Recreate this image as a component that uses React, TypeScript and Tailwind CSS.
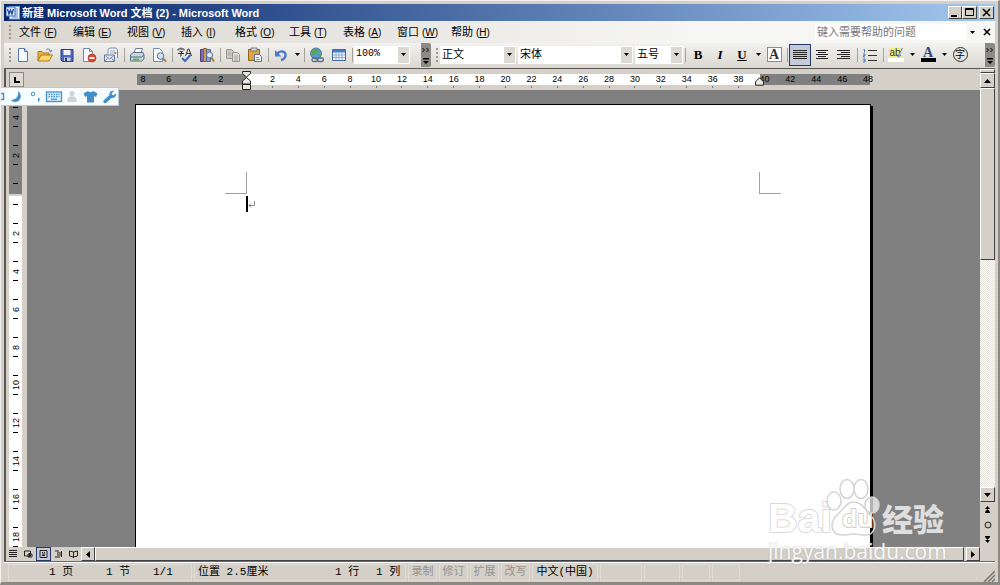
import * as React from "react";
import { clsx } from "clsx";

const menus = [
  ["文件", "F"],
  ["编辑", "E"],
  ["视图", "V"],
  ["插入", "I"],
  ["格式", "O"],
  ["工具", "T"],
  ["表格", "A"],
  ["窗口", "W"],
  ["帮助", "H"],
];

// Ruler labels in characters, two per step; 0 is where the indent marker sits
const rulerMarks = Array.from({ length: 29 }, (_, i) => i * 2 - 8);
const sideMarks = Array.from({ length: 12 }, (_, i) => i * 2 - 4);

const cjk = "font-['Liberation_Sans','Noto_Sans_CJK_SC',sans-serif]";
const mono = "font-['Liberation_Mono','Noto_Sans_CJK_SC',monospace]";
const raised = "bg-[#d4d0c8] border border-t-white border-l-white border-r-[#404040] border-b-[#404040]";

function Icon({ children, className }: { children: React.ReactNode; className?: string }) {
  return (
    <svg viewBox="0 0 16 16" className={clsx("w-4 h-4 shrink-0", className)} fill="none">
      {children}
    </svg>
  );
}

function ToolButton({ label, active, children }: { label: string; active?: boolean; children: React.ReactNode }) {
  return (
    <button
      aria-label={label}
      className={clsx(
        "w-[22px] h-[22px] shrink-0 flex items-center justify-center",
        active && "bg-[#c5cad8] border border-[#26386b]"
      )}
    >
      {children}
    </button>
  );
}

function Caret({ label }: { label: string }) {
  return (
    <button aria-label={label} className="w-[10px] h-[22px] shrink-0 flex items-center justify-center">
      <svg viewBox="0 0 5 3" className="w-[5px] h-[3px]"><path d="M0 0h5L2.5 3z" fill="#000" /></svg>
    </button>
  );
}

function Separator() {
  return <div className="w-1 h-[14px] shrink-0 flex justify-center"><div className="w-px bg-[#a5a29b]" /></div>;
}

function Grip() {
  return (
    <svg viewBox="0 0 3 14" className="w-[3px] h-[14px] shrink-0" fill="#9b988f">
      <path d="M0 0h2v2H0zM0 4h2v2H0zM0 8h2v2H0zM0 12h2v2H0z" />
    </svg>
  );
}

function Combo({ label, value, className, textClass }: { label: string; value: string; className: string; textClass: string }) {
  return (
    <div className={clsx("relative h-[18px] shrink-0 bg-white", className)}>
      <select aria-label={label} className={clsx("block appearance-none w-full h-4 pl-[2px] leading-4 outline-none", textClass)}>
        <option>{value}</option>
      </select>
      <span className="absolute right-px top-px w-[11px] h-4 bg-[#dcd9d2] flex items-center justify-center pointer-events-none">
        <svg viewBox="0 0 5 3" className="w-[5px] h-[3px]"><path d="M0 0h5L2.5 3z" fill="#000" /></svg>
      </span>
    </div>
  );
}

function Overflow() {
  return (
    <button aria-label="工具栏选项" className="w-[10px] h-[24px] shrink-0 rounded-r-xs bg-[#8c8a86] flex justify-center">
      <svg viewBox="0 0 8 24" className="w-2 h-6" fill="#000">
        <path d="M0 5h1l2 2-2 2H0l2-2zM4 5h1l2 2-2 2H4l2-2zM1 15h6v1.500H1zM1 18h6l-3 3z" />
      </svg>
    </button>
  );
}

function TitleBar() {
  return (
    <header className="h-[17px] shrink-0 flex items-center pl-[2px] pr-px bg-linear-to-r from-[#0b256b] to-[#a3c8ef]">
      <svg viewBox="0 0 14 14" className="w-[14px] h-[14px]">
        <rect x="3.500" y=".5" width="10" height="12.500" fill="#eef4fc" stroke="#7d9fd0" />
        <path d="M8 3h4M9 5h3M9 7h3M8 9h4M6 11h6" stroke="#6a90cc" />
        <rect x="0" y="1" width="9" height="9" fill="#dce9fb" stroke="#4d78bd" />
        <path d="M1.500 3l1.500 5 1.500-4L6 8l1.500-5" stroke="#1d4796" strokeWidth="1.300" fill="none" />
      </svg>
      <h1 className={clsx("ml-[2px] text-[11px] leading-4 font-bold text-white whitespace-nowrap", cjk)}>
        新建 Microsoft Word 文档 (2) - Microsoft Word
      </h1>
      <div className="ml-auto flex">
        <button aria-label="最小化" className={clsx("w-[14px] h-[13px]", raised)}>
          <svg viewBox="0 0 12 11"><path d="M2 8h6v2H2z" /></svg>
        </button>
        <button aria-label="最大化" className={clsx("w-[15px] h-[13px]", raised)}>
          <svg viewBox="0 0 13 11"><path d="M2.500 1.500h8v7h-8zM2 2.500h9" fill="none" stroke="#000" /></svg>
        </button>
        <button aria-label="关闭" className={clsx("ml-[2px] w-[15px] h-[13px]", raised)}>
          <svg viewBox="0 0 13 11"><path d="M3 2l7 7M10 2L3 9" stroke="#000" strokeWidth="1.600" /></svg>
        </button>
      </div>
    </header>
  );
}

function MenuBar() {
  return (
    <nav className={clsx("h-[22px] shrink-0 flex items-center pl-[5px] pr-[2px] bg-linear-to-r from-[#dad6ce] to-[#f6f6f5] to-70%", cjk)}>
      <Grip />
      <div className="flex ml-[7px]">
        {menus.map(([name, key]) => (
          <button key={name} className="w-[54px] shrink-0 text-left text-[11px] leading-[18px] whitespace-nowrap">
            {name}
            <span className="ml-[3px] text-[10px]">(<u>{key}</u>)</span>
          </button>
        ))}
      </div>
      <input
        aria-label="键入需要帮助的问题"
        placeholder="键入需要帮助的问题"
        className="ml-auto w-[152px] h-4 pl-[2px] bg-white text-[11px] leading-4 placeholder:text-[#77767a] outline-none"
      />
      <Caret label="帮助列表" />
      <button aria-label="关闭文档" className="ml-1 w-3 h-4 flex items-center justify-center">
        <svg viewBox="0 0 8 8" className="w-2 h-2"><path d="M1 1l6 6M7 1L1 7" stroke="#000" strokeWidth="1.600" /></svg>
      </button>
    </nav>
  );
}

function StandardToolbar() {
  return (
    <div className="flex items-center shrink-0 pl-[3px]">
      <Grip />
      <ToolButton label="新建空白文档">
        <Icon><path d="M3.500 1.500h6l3 3v10h-9z" fill="#f5f9ff" stroke="#5a78ad" /><path d="M9.500 1.500v3h3" fill="#bcd0ee" stroke="#5a78ad" /></Icon>
      </ToolButton>
      <ToolButton label="打开">
        <Icon>
          <path d="M1 14V4.500h4l1.500 1.500H12v3" fill="#e9b53c" stroke="#a87b20" />
          <path d="M1 14l3-6h11.500l-3.500 6z" fill="#fbd56d" stroke="#a87b20" />
          <path d="M9 3c2-2 4-1 4.500 1.500M12 3.500l1.600 1.500L15 3" stroke="#4f79b5" />
        </Icon>
      </ToolButton>
      <ToolButton label="保存">
        <Icon>
          <path d="M2 2.500h12v12H3.500L2 13z" fill="#4e68c0" stroke="#293e8c" />
          <path d="M4.500 3h7v5h-7z" fill="#eef2fc" /><path d="M5 10.500h6.500V14H5z" fill="#c9d1e9" /><path d="M6 11h2v3H6z" fill="#27387d" />
        </Icon>
      </ToolButton>
      <ToolButton label="权限">
        <Icon>
          <path d="M2.500 1.500h6l3 3v10h-9z" fill="#f8fbff" stroke="#6f8ab9" /><path d="M8.500 1.500v3h3" stroke="#6f8ab9" />
          <circle cx="11" cy="11" r="4" fill="#d94a32" stroke="#a82f1d" strokeWidth=".6" /><path d="M8.500 11h5" stroke="#fff" strokeWidth="1.800" />
        </Icon>
      </ToolButton>
      <ToolButton label="电子邮件">
        <Icon>
          <path d="M5 7V2.500L7 1h6l1.500 2v8" fill="#f2f6fd" stroke="#7b8bad" />
          <path d="M7 4h5M7 6h5" stroke="#9aaac8" /><circle cx="12.500" cy="6" r="1" fill="#d65b43" />
          <path d="M1.500 8h10v6.500h-10z" fill="#e5ecf8" stroke="#6579a5" /><path d="M1.500 8l5 4 5-4M1.500 14.500l3.500-4M11.500 14.500L8 10.500" stroke="#7c8eb5" />
        </Icon>
      </ToolButton>
      <Separator />
      <ToolButton label="打印">
        <Icon>
          <path d="M5 6l1.500-4.500h7L12 6z" fill="#fff" stroke="#6b7f9c" />
          <path d="M1.500 8l2.500-2.500h10L15 8v4l-2.500 2h-11z" fill="#c8d4df" stroke="#5b6f80" />
          <path d="M2 10h10.500L15 8" stroke="#5b6f80" /><path d="M4 11.500h6v2H4z" fill="#6dad61" />
        </Icon>
      </ToolButton>
      <ToolButton label="打印预览">
        <Icon>
          <path d="M2.500 1.500h6l3 3v10h-9z" fill="#f8fbff" stroke="#6f8ab9" />
          <circle cx="9.500" cy="9" r="3.300" fill="#cfe5f6" stroke="#596c88" /><path d="M12 11.500l3 3" stroke="#b57b35" strokeWidth="2" />
        </Icon>
      </ToolButton>
      <Separator />
      <ToolButton label="拼写和语法">
        <Icon>
          <path d="M1 3.500V2h6v1.500M4 .5V2M2.500 4.500h3L4 6v3H3M1 6.500h6M8.500 9L11 2h1l2.500 7M9.500 6.500h4" stroke="#333" />
          <path d="M5 11l3 3 5.500-6" stroke="#3f68bd" strokeWidth="2" />
        </Icon>
      </ToolButton>
      <ToolButton label="信息检索">
        <Icon>
          <path d="M1.500 2.500h3v12h-3z" fill="#7b6bb4" stroke="#4c4082" /><path d="M4.500 1.500h3v13h-3z" fill="#d79a4a" stroke="#8f6022" /><path d="M7.500 2.500h4v12h-4z" fill="#91a9d8" stroke="#51679b" />
          <circle cx="10.500" cy="8" r="3" fill="#e2effa" stroke="#596c88" /><path d="M12.500 10.500l2.500 4" stroke="#b57b35" strokeWidth="2" />
        </Icon>
      </ToolButton>
      <Separator />
      <ToolButton label="复制">
        <Icon>
          <path d="M1.500 2.500h5l2 2v7h-7z" fill="#cbc9c5" stroke="#98958f" /><path d="M7.500 5.500h5l2 2v7h-7z" fill="#dddbd7" stroke="#98958f" /><path d="M9 9h4M9 11h4M9 13h4M3 6h3M3 8h3" stroke="#a5a29c" />
        </Icon>
      </ToolButton>
      <ToolButton label="粘贴">
        <Icon>
          <path d="M1.500 2.500h11v11h-11z" fill="#dfa63a" stroke="#8d651e" /><path d="M4 1h6v3H4z" fill="#d8d8d8" stroke="#666" strokeWidth=".8" />
          <path d="M7.500 7.500h5l2 2v5h-7z" fill="#f5f8ff" stroke="#5a70a2" /><path d="M9 10.500h3M9 12.500h4" stroke="#7e93c0" />
        </Icon>
      </ToolButton>
      <Separator />
      <ToolButton label="撤消">
        <Icon><path d="M4 7c3-4 8-3 8.500.5.300 3-2 5-4.500 5.500" stroke="#4a7acb" strokeWidth="2.400" /><path d="M2 3v6.500h6.500z" fill="#4a7acb" /></Icon>
      </ToolButton>
      <Caret label="撤消列表" />
      <Separator />
      <ToolButton label="插入超链接">
        <Icon>
          <circle cx="7" cy="6.500" r="5.500" fill="#5a9bd0" stroke="#37699b" strokeWidth=".8" />
          <path d="M3 4c2-3 5-3 6-1S8 6 6 7s-3 2-3 2M9 8l3-2v3l-2 1z" fill="#58a552" />
          <rect x="3" y="11" width="6" height="3.500" rx="1.700" stroke="#5b6a86" strokeWidth="1.300" /><rect x="8" y="11" width="6.500" height="3.500" rx="1.700" stroke="#5b6a86" strokeWidth="1.300" />
        </Icon>
      </ToolButton>
      <ToolButton label="插入表格">
        <Icon><path d="M1.500 2.500h13v11h-13z" fill="#f4f8ff" stroke="#46699f" /><path d="M2 3h12v2.500H2z" fill="#4a7cc5" /><path d="M2 8h12M2 10.500h12M5 5.500V13M8 5.500V13M11 5.500V13" stroke="#8eabd6" /></Icon>
      </ToolButton>
      <Separator />
      <Combo label="显示比例" value="100%" className="w-[56px]" textClass="text-[10px] font-['Liberation_Mono',monospace]" />
      <div className="w-[11px]" />
      <Overflow />
    </div>
  );
}

function FormattingToolbar() {
  return (
    <div className="flex items-center flex-1 pl-[5px]">
      <Grip />
      <Combo label="样式" value="正文" className="ml-px w-[76px]" textClass={clsx("text-[11px]", cjk)} />
      <Combo label="字体" value="宋体" className="ml-[2px] w-[115px]" textClass={clsx("text-[11px]", cjk)} />
      <Combo label="字号" value="五号" className="ml-[2px] w-[48px]" textClass={clsx("text-[11px]", cjk)} />
      <Separator />
      <ToolButton label="加粗"><b className="font-['Liberation_Serif',serif] text-[13px]">B</b></ToolButton>
      <ToolButton label="倾斜"><i className="font-['Liberation_Serif',serif] text-[13px] font-bold">I</i></ToolButton>
      <ToolButton label="下划线"><u className="font-['Liberation_Serif',serif] text-[13px] font-bold">U</u></ToolButton>
      <Caret label="下划线样式" />
      <ToolButton label="字符边框">
        <span className="w-[15px] h-[15px] border border-[#7f8da8] bg-white flex items-center justify-center font-['Liberation_Serif',serif] font-bold text-[14px] text-[#333]">A</span>
      </ToolButton>
      <Separator />
      <ToolButton label="两端对齐" active><Icon><path d="M1 3.500h14M1 5.500h14M1 7.500h14M1 9.500h14M1 11.500h14" stroke="#222" /></Icon></ToolButton>
      <ToolButton label="居中"><Icon><path d="M2 3.500h12M4 5.500h8M2 7.500h12M4 9.500h8M2 11.500h12" stroke="#222" /></Icon></ToolButton>
      <ToolButton label="右对齐"><Icon><path d="M1 3.500h13M5 5.500h9M1 7.500h13M5 9.500h9M1 11.500h13" stroke="#222" /></Icon></ToolButton>
      <Separator />
      <ToolButton label="编号">
        <Icon><path d="M6 3.500h9M6 8.500h9M6 13.500h9" stroke="#333" /><path d="M1.500 2.500h1v3M1 7h2v1.500H1.500V10H3M1 12h2v3H1M1.500 13.500H3" stroke="#4a78c0" /></Icon>
      </ToolButton>
      <Separator />
      <ToolButton label="突出显示">
        <span className="flex flex-col items-center">
          <span className="flex items-center h-[11px]">
            <span className="bg-[#f4ee83] text-[10px] leading-[10px] text-[#333] font-['Liberation_Sans',sans-serif]">ab</span>
            <svg viewBox="0 0 6 11" className="-ml-1 w-[6px] h-[11px]"><path d="M5.500 1L2 7l-1 3 3-2" stroke="#5479b5" fill="#b9d0ef" /></svg>
          </span>
          <span className="w-4 h-1 bg-white" />
        </span>
      </ToolButton>
      <Caret label="突出显示颜色" />
      <ToolButton label="字体颜色">
        <span className="flex flex-col items-center">
          <span className="font-['Liberation_Serif',serif] font-bold text-[14px] leading-[11px] text-[#2e4a86]">A</span>
          <span className="w-[15px] h-1 bg-black" />
        </span>
      </ToolButton>
      <Caret label="字体颜色列表" />
      <ToolButton label="带圈字符">
        <span className={clsx("w-[15px] h-[15px] rounded-full border border-[#333] flex items-center justify-center text-[10px] leading-none", cjk)}>字</span>
      </ToolButton>
      <div className="flex-1" />
      <Overflow />
    </div>
  );
}

function HorizontalRuler() {
  return (
    <div className="flex items-center h-[21px] flex-1">
      <button aria-label="制表符" className="ml-[3px] w-[15px] h-[15px] shrink-0 border border-[#8b8881] bg-[#dedbd4] flex items-center justify-center">
        <svg viewBox="0 0 6 6" className="w-[6px] h-[6px]"><path d="M1 0v5h5" stroke="#000" strokeWidth="2" fill="none" /></svg>
      </button>
      <div className="relative ml-[106px] w-[751px] shrink-0 h-[18px] grid grid-cols-[repeat(29,minmax(0,1fr))] bg-[linear-gradient(90deg,transparent_7px,#808080_7px,#808080_117px,#fff_117px,#fff_630px,#808080_630px,#808080_740px,transparent_740px)] bg-no-repeat bg-size-[100%_11px] bg-position-[0_3px]">
        {rulerMarks.map((n) => (
          <div key={n} className="flex flex-col items-center pt-[3px] text-[9px] leading-[10px] font-['Liberation_Sans',sans-serif]">
            <span className="h-[12px]">{n === 0 ? "" : Math.abs(n)}</span>
            {n > 0 && n < 40 && <span className="w-px h-[2px] bg-[#777]" />}
          </div>
        ))}
        {/* Indent markers */}
        <svg viewBox="0 0 9 20" className="absolute left-[112px] top-0 w-[9px] h-5" fill="#eae8e3" stroke="#222">
          <path d="M.5.5h8v2L4.500 6 .5 2.500zM4.500 6.500l4 3.500v3h-8v-3zM.5 13.500h8v5h-8z" />
        </svg>
        <svg viewBox="0 0 9 9" className="absolute left-[625px] top-[6px] w-[9px] h-[9px]" fill="#eae8e3" stroke="#222">
          <path d="M4.500.8l4 4v3.400h-8V4.800z" />
        </svg>
      </div>
    </div>
  );
}

function VerticalRuler() {
  return (
    <div className="w-[21px] shrink-0 overflow-hidden bg-[#d4d0c8] flex pl-[3px] pt-2">
      <div className="w-[13px] overflow-hidden bg-[linear-gradient(#808080_96px,#d4d0c8_96px,#d4d0c8_98px,#fff_98px)]">
        {sideMarks.map((n) => (
          <div key={n} className={clsx("flex flex-col items-center justify-between py-[9px] text-[9px]", n === 0 ? "h-10" : "h-[38px]")}>
            <span className="w-[5px] h-px shrink-0 bg-black" />
            <span className="h-[10px] flex items-center justify-center leading-[10px] [writing-mode:vertical-rl] rotate-180 font-['Liberation_Sans',sans-serif]">
              {n === 0 ? "" : Math.abs(n)}
            </span>
            <span className="w-[5px] h-px shrink-0 bg-black" />
          </div>
        ))}
      </div>
    </div>
  );
}

function Watermark() {
  return (
    <div className="absolute right-[50px] bottom-[18px] w-[180px] h-[86px] pointer-events-none">
      <div className="absolute left-0 top-[22px] flex items-center h-[36px] leading-[36px]">
        <span className="w-[74px] text-[41px] font-bold text-white font-['Liberation_Sans',sans-serif] [-webkit-text-stroke:2px_#dadada] [paint-order:stroke_fill]">Bai</span>
        <span className="w-[40px] text-[24px] font-bold text-white font-['Open_Sans',sans-serif] [-webkit-text-stroke:2px_#cfcfcf] [paint-order:stroke_fill]">du</span>
        <span className="text-[31px] font-black text-[#dedede] whitespace-nowrap font-['Noto_Sans_CJK_SC',sans-serif]">经验</span>
      </div>
      <svg viewBox="0 0 180 64" className="absolute left-0 top-0 w-[180px] h-[64px]" fill="#fff" fillOpacity=".7" stroke="#d4d4d4" strokeWidth="1.500">
        <ellipse cx="66" cy="23" rx="7" ry="9" />
        <ellipse cx="79" cy="11" rx="7" ry="9.500" />
        <ellipse cx="93" cy="11" rx="7" ry="9.500" />
        <ellipse cx="104" cy="27" rx="7" ry="8" />
        <path d="M86 24c8 0 11 8 16 13 8 7 6 20-5 20-5 0-7-1-11-1s-7 1-12 1c-11 0-13-12-5-20 6-5 9-13 17-13z" fillOpacity="0" />
      </svg>
      <span className="absolute left-0 top-[61px] text-[21px] leading-[24px] whitespace-nowrap text-white/90 font-['Open_Sans',sans-serif] [text-shadow:0_0_2px_#aaa]">
        jingyan.baidu.com
      </span>
    </div>
  );
}

function DocumentArea() {
  return (
    <main className="flex-1 min-w-0 overflow-hidden bg-[#808080] pt-[14px]">
      <article className="ml-[108px] w-[736px] h-full bg-white border-t border-l border-r border-black shadow-[2px_2px_0_#000] pt-[67px]">
        <div className="ml-[89px] w-[556px] flex justify-between">
          <span className="w-[22px] h-[22px] border-r border-b border-[#a0a0a0]" />
          <span className="w-[22px] h-[22px] border-l border-b border-[#a0a0a0]" />
        </div>
        <div className="ml-[110px] mt-[2px] flex items-center">
          <span className="w-[2px] h-[16px] bg-black" />
          <svg viewBox="0 0 7 7" className="w-[7px] h-[7px]" fill="none" stroke="#888"><path d="M6.500 0v4.500H1M3 2.500l-2 2 2 2" /></svg>
        </div>
      </article>
    </main>
  );
}

const trough = "bg-[repeating-conic-gradient(#fff_0_25%,#e4e1db_0_50%)] bg-size-[2px_2px]";

function VerticalScroll() {
  return (
    <div className="w-[15px] shrink-0 flex flex-col bg-[#d4d0c8]">
      <div className={clsx("h-1 shrink-0", raised)} />
      <button aria-label="向上滚动" className={clsx("h-[15px] shrink-0 flex items-center justify-center", raised)}>
        <svg viewBox="0 0 7 4" className="w-[7px] h-1"><path d="M0 4h7L3.500 0z" /></svg>
      </button>
      <div className={clsx("flex-1 flex flex-col", trough)}>
        <div className={clsx("h-[172px]", raised)} />
      </div>
      <button aria-label="向下滚动" className={clsx("h-[15px] shrink-0 flex items-center justify-center", raised)}>
        <svg viewBox="0 0 7 4" className="w-[7px] h-1"><path d="M0 0h7L3.500 4z" /></svg>
      </button>
      <button aria-label="前一页" className="h-[15px] shrink-0 flex items-center justify-center">
        <svg viewBox="0 0 5 7" className="w-[5px] h-[7px]"><path d="M0 3l2.500-3L5 3zM0 6l2.500-3L5 6v1H0z" /></svg>
      </button>
      <button aria-label="选择浏览对象" className="h-[15px] shrink-0 flex items-center justify-center">
        <svg viewBox="0 0 8 8" className="w-2 h-2"><circle cx="4" cy="4" r="3" fill="#c7c4bd" stroke="#222" /></svg>
      </button>
      <button aria-label="下一页" className="h-[15px] shrink-0 flex items-center justify-center">
        <svg viewBox="0 0 5 7" className="w-[5px] h-[7px]"><path d="M0 0h5v1L2.500 4 0 1zM0 4l2.500 3L5 4z" /></svg>
      </button>
      <div className="h-[14px] shrink-0" />
    </div>
  );
}

function ViewButton({ label, active, d }: { label: string; active?: boolean; d: string }) {
  return (
    <button aria-label={label} className={clsx("w-[15px] h-[14px] shrink-0 flex items-center justify-center", active && "border border-[#26386b] bg-[#c5cad8]")}>
      <svg viewBox="0 0 9 8" className="w-[9px] h-2 shrink-0" fill="none" stroke="#222"><path d={d} /></svg>
    </button>
  );
}

function HorizontalScroll() {
  return (
    <div className="h-[14px] shrink-0 flex bg-[#d4d0c8]">
      <ViewButton label="普通视图" d="M0 .5h8M0 2.500h8M0 4.500h8M0 6.500h8" />
      <ViewButton label="Web 版式视图" d="M.5 1h6v5h-6zM4 4h4v3H4zM5.500 3v4" />
      <ViewButton label="页面视图" active d="M1 .5h7v7H1zM3 2.500h1M5 2.500h1M3 4h3M3 5.500h3" />
      <ViewButton label="大纲视图" d="M1 1h4M3 3h5M3 5h5M1 7h5M7.500 1v6" />
      <ViewButton label="阅读版式" d="M.5 1l4 1 4-1v5l-4 1-4-1zM4.500 2v6" />
      <button aria-label="向左滚动" className={clsx("w-[14px] shrink-0 flex items-center justify-center", raised)}>
        <svg viewBox="0 0 4 7" className="w-1 h-[7px]"><path d="M4 0v7L0 3.500z" /></svg>
      </button>
      <div className={clsx("flex-1", raised)} />
      <button aria-label="向右滚动" className={clsx("ml-[2px] w-[14px] shrink-0 flex items-center justify-center", raised)}>
        <svg viewBox="0 0 4 7" className="w-1 h-[7px]"><path d="M0 0v7l4-3.500z" /></svg>
      </button>
    </div>
  );
}

function StatusBar() {
  const cell = "h-[17px] shrink-0 flex items-center border border-[#dfdcd6]";
  return (
    <footer className={clsx("h-5 shrink-0 flex items-center gap-[2px] pl-1 bg-[#d4d0c8] border-t border-white text-[11px] whitespace-nowrap", mono)}>
      <div className={clsx(cell, "w-[184px]")}>
        <span className="ml-10 w-[57px]">1 页</span>
        <span className="w-[47px]">1 节</span>
        <span>1/1</span>
      </div>
      <div className={clsx(cell, "w-[212px]")}>
        <span className="ml-[3px] w-[137px]">位置 2.5厘米</span>
        <span className="w-[41px]">1 行</span>
        <span>1 列</span>
      </div>
      {["录制", "修订", "扩展", "改写"].map((t) => (
        <button key={t} className={clsx(cell, "w-[29px] justify-center text-[#96938d]")}>{t}</button>
      ))}
      <div className={clsx(cell, "w-[66px] justify-center")}>中文(中国)</div>
      <div className={clsx(cell, "w-[42px]")} />
      <div className={clsx(cell, "w-[36px]")} />
      <div className={clsx(cell, "w-[28px]")} />
      <div className={clsx(cell, "w-[28px]")} />
      <svg viewBox="0 0 12 12" className="ml-auto mt-auto w-3 h-3" stroke="#77746d" strokeWidth="1.500"><path d="M1 12L12 1M5 12l7-7M9 12l3-3" /></svg>
    </footer>
  );
}

function ImeBar() {
  return (
    <div className="absolute left-0 top-[86px] w-[118px] h-[19px] bg-[#f7fdff] border border-l-0 border-[#b5cddd] flex items-center">
      <svg viewBox="1 0 117 17" className="w-[117px] h-[17px]" fill="#438fca">
        <path d="M0 5.500h3.500v6H0" fill="none" stroke="#438fca" strokeWidth="1.500" />
        <path d="M18 3c5 4 3 11-3 11-2 0-3-.8-4-2 5 0 8-4 7-9z" />
        <circle cx="33" cy="6" r="1.800" fill="none" stroke="#438fca" />
        <path d="M38 10l1.500 0c.5 2 0 3-1.500 4z" />
        <rect x="46.500" y="4" width="15" height="9.500" fill="#dcf0fb" stroke="#438fca" strokeWidth="1.300" />
        <path d="M48.500 6.500h11M48.500 8.700h11" stroke="#438fca" strokeWidth="1.300" strokeDasharray="1.500 1" /><path d="M51 11.200h6" stroke="#438fca" strokeWidth="1.300" />
        <circle cx="72" cy="5.500" r="2.600" fill="#d0d3d6" /><path d="M67.500 14V11c0-2 2-2.800 4.500-2.800s4.500.8 4.500 2.800v3z" fill="#d0d3d6" />
        <path d="M83.500 5.500L88 3c1 1.500 4 1.500 5 0l4.500 2.500L96 9l-2-1v6.500h-7V8l-2 1z" />
        <path d="M103.500 12.500l6-5.500c-.5-3 2-5 4.500-4l-2.500 2.500 1.500 2 3-2c.5 3-2 5-4.500 4.500l-5.500 5c-1.500 1-3.500-1-2.500-2.500z" />
      </svg>
    </div>
  );
}

export default function App() {
  return (
    <div className="relative h-screen w-full overflow-hidden flex flex-col bg-[#d4d0c8] text-black border-t border-l border-[#f2f1ef] border-r-2 border-r-[#8b8984] border-b-[3px] border-b-[#8b8984] pt-[3px] pl-[3px] pr-[3px] select-none">
      <TitleBar />
      <MenuBar />
      <div className="h-[25px] shrink-0 flex items-center bg-linear-to-b from-[#f3f2f0] to-[#dad7cf] pl-[2px] pb-[2px]">
        <StandardToolbar />
        <FormattingToolbar />
      </div>
      <div className="flex-1 min-h-0 flex border-t border-l-2 border-[#5a5854] border-b border-b-[#6b6963]">
        <div className="flex-1 min-w-0 flex flex-col">
          <div className="flex overflow-hidden shrink-0"><HorizontalRuler /></div>
          <div className="flex-1 min-h-0 flex">
            <VerticalRuler />
            <DocumentArea />
          </div>
          <HorizontalScroll />
        </div>
        <VerticalScroll />
      </div>
      <StatusBar />
      <Watermark />
      <ImeBar />
    </div>
  );
}
